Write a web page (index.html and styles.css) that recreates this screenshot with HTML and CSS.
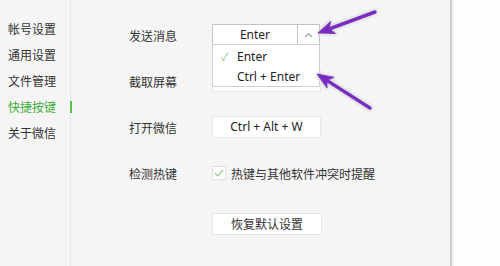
FILE: index.html
```html
<!DOCTYPE html>
<html lang="zh">
<head>
<meta charset="utf-8">
<title>快捷按键</title>
<link rel="stylesheet" href="styles.css">
</head>
<body>
<div class="page">
  <div class="main">
    <nav class="sidebar">
      <div class="nav-item">帐号设置</div>
      <div class="nav-item">通用设置</div>
      <div class="nav-item">文件管理</div>
      <div class="nav-item active">快捷按键</div>
      <div class="nav-item">关于微信</div>
    </nav>
    <section class="content">
      <div class="row">
        <div class="label">发送消息</div>
        <div class="select">
          <div class="select-value">Enter</div>
          <div class="select-arrow">
            <svg width="9" height="6" viewBox="0 0 9 6"><path d="M1 5 L4.5 1.5 L8 5" fill="none" stroke="#a0a0a0" stroke-width="1.2"/></svg>
          </div>
          <div class="select-list">
            <div class="option"><span class="check">✓</span>Enter</div>
            <div class="option">Ctrl + Enter</div>
          </div>
        </div>
      </div>
      <div class="row">
        <div class="label">截取屏幕</div>
        <div class="keybox"></div>
      </div>
      <div class="row">
        <div class="label">打开微信</div>
        <div class="keybox">Ctrl + Alt + W</div>
      </div>
      <div class="row">
        <div class="label">检测热键</div>
        <label class="checkline">
          <span class="checkbox">
            <svg width="10" height="8" viewBox="0 0 10 8"><path d="M1 4 L3.8 6.8 L9 1" fill="none" stroke="#8cc98c" stroke-width="1.2"/></svg>
          </span>
          <span>热键与其他软件冲突时提醒</span>
        </label>
      </div>
      <div class="row row-button">
        <div class="label"></div>
        <div class="button">恢复默认设置</div>
      </div>
    </section>
  </div>
  <div class="side-white"></div>
  <svg class="arrows" width="500" height="266" viewBox="0 0 500 266">
    <defs>
      <filter id="halo" x="-20%" y="-20%" width="140%" height="140%">
        <feMorphology in="SourceAlpha" operator="dilate" radius="1.2" result="d"/>
        <feGaussianBlur in="d" stdDeviation="1" result="b"/>
        <feFlood flood-color="#d8d8d8"/>
        <feComposite in2="b" operator="in" result="s"/>
        <feMerge><feMergeNode in="s"/><feMergeNode in="SourceGraphic"/></feMerge>
      </filter>
    </defs>
    <g filter="url(#halo)" fill="#7a2cc2" stroke="#7a2cc2">
      <line x1="375" y1="12" x2="329" y2="29" stroke-width="3.5" stroke-linecap="round"/>
      <polygon points="318,33 335.5,33.5 329.3,28.8 330.5,21.5" stroke-width="1" stroke-linejoin="round"/>
      <line x1="370" y1="108" x2="327" y2="80.5" stroke-width="3.5" stroke-linecap="round"/>
      <polygon points="317,74 334,77.3 327.1,80.5 327,88" stroke-width="1" stroke-linejoin="round"/>
    </g>
  </svg>
</div>
</body>
</html>
```

FILE: styles.css
```css
html, body {
  margin: 0;
  padding: 0;
}
body {
  width: 500px;
  height: 266px;
  overflow: hidden;
  font-family: "Noto Sans", "Noto Sans CJK SC", sans-serif;
  font-size: 12px;
  color: #333;
  background: #f5f5f5;
}
.page {
  position: relative;
  display: flex;
  width: 500px;
  height: 266px;
}
.main {
  display: flex;
  width: 450px;
  height: 266px;
  background: #f5f5f5;
}
.sidebar {
  width: 71px;
  box-sizing: border-box;
  border-right: 1px solid #e6e6e6;
  padding-top: 16px;
  font-family: "Noto Sans CJK SC", sans-serif;
}
.nav-item {
  position: relative;
  height: 26px;
  line-height: 26px;
  padding-left: 8px;
  color: #333;
}
.nav-item.active {
  color: #3dae38;
}
.nav-item.active::after {
  content: "";
  position: absolute;
  right: -2px;
  top: 7px;
  width: 2px;
  height: 12px;
  background: #5cbf55;
}
.content {
  flex: 1;
  padding-top: 24px;
  padding-left: 58px;
  display: flex;
  flex-direction: column;
  gap: 24px;
}
.row {
  display: flex;
  align-items: center;
  height: 22px;
}
.row-button {
  margin-top: 5px;
}
.label {
  width: 83px;
  font-family: "Noto Sans CJK SC", sans-serif;
  color: #333;
}
.select {
  position: relative;
  display: flex;
  width: 108px;
  height: 21px;
  box-sizing: border-box;
  border: 1px solid #c4c4c4;
  background: #fff;
  align-self: flex-start;
}
.select-value {
  width: 84px;
  border-right: 1px solid #c4c4c4;
  text-align: center;
  line-height: 19px;
  color: #222;
}
.select-arrow {
  flex: 1;
  display: flex;
  align-items: center;
  justify-content: center;
}
.select-list {
  position: absolute;
  left: -1px;
  top: 19px;
  width: 108px;
  height: 43px;
  box-sizing: border-box;
  border: 1px solid #cfcfcf;
  background: #fff;
  padding-top: 2px;
  z-index: 2;
}
.option {
  height: 20px;
  line-height: 20px;
  padding-left: 24px;
  position: relative;
  color: #222;
}
.check {
  position: absolute;
  left: 8px;
  top: 0;
  color: #8cc98c;
  font-size: 11px;
}
.keybox {
  width: 109px;
  height: 22px;
  box-sizing: border-box;
  border: 1px solid #e8e8e8;
  background: #fff;
  text-align: center;
  line-height: 20px;
  color: #222;
}
.checkline {
  display: flex;
  align-items: center;
  gap: 5px;
  font-family: "Noto Sans CJK SC", sans-serif;
  color: #333;
}
.checkbox {
  width: 14px;
  height: 14px;
  box-sizing: border-box;
  border: 1px solid #e0e0e0;
  background: #fff;
  display: flex;
  align-items: center;
  justify-content: center;
}
.button {
  width: 110px;
  height: 22px;
  box-sizing: border-box;
  border: 1px solid #e6e6e6;
  background: #fff;
  text-align: center;
  line-height: 20px;
  font-family: "Noto Sans CJK SC", sans-serif;
  color: #333;
}
.side-white {
  flex: 1;
  border-left: 2px solid #cdcdcd;
  background: linear-gradient(to right, #f0f0f0 0, #fdfdfd 3px, #fdfdfd 100%);
}
.arrows {
  position: absolute;
  left: 0;
  top: 0;
  pointer-events: none;
  z-index: 5;
}
```
